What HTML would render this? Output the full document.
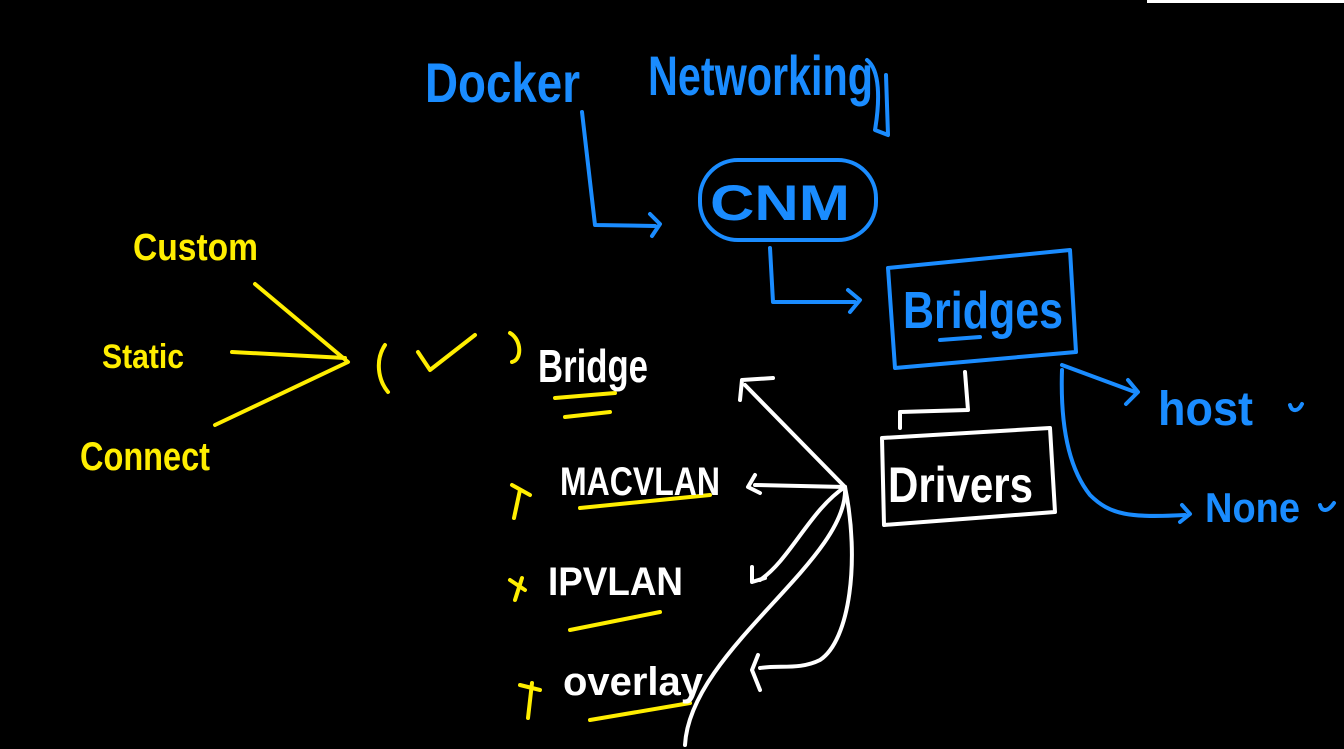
<!DOCTYPE html>
<html><head><meta charset="utf-8"><style>
html,body{margin:0;padding:0;background:#000;width:1344px;height:749px;overflow:hidden}
svg{display:block}
text{font-family:"Liberation Sans",sans-serif;font-weight:bold}
</style></head><body>
<svg width="1344" height="749" viewBox="0 0 1344 749" xmlns="http://www.w3.org/2000/svg">
<rect width="1344" height="749" fill="#000"/>
<rect x="1147" y="0" width="197" height="3" fill="#fff"/>
<g fill="none" stroke-linecap="round" stroke-linejoin="round" stroke-width="4">
<g stroke="#1a8cff">
<path d="M582 112 L595 225 L655 226 M650 214 L660 224 L652 236"/>
<rect x="700" y="160" width="176" height="80" rx="38"/>
<path d="M770 248 L773 302 L855 302 M848 290 L860 300 L850 312"/>
<path d="M888 268 L1070 250 L1076 352 L895 368 Z"/>
<path d="M940 340 L980 337"/>
<path d="M1062 365 L1135 392 M1128 380 L1138 392 L1126 404"/>
<path d="M1062 370 C1060 430 1070 470 1090 495 C1110 515 1130 518 1185 515 M1182 505 L1190 514 L1180 522"/>
<path d="M867 60 C880 70 880 100 875 130 L888 135 L886 75"/>
<path d="M1290 405 C1292 412 1298 412 1302 404"/>
<path d="M1320 505 C1322 512 1328 512 1334 503"/>
</g>
<g stroke="#fff">
<path d="M965 372 L968 410 L900 412 L900 428"/>
<path d="M882 438 L1050 428 L1055 512 L884 525 Z"/>
<path d="M845 487 L745 385 M740 400 L742 380 L773 378"/>
<path d="M845 487 L755 485 M755 475 L748 487 L760 493"/>
<path d="M845 487 C810 510 790 560 760 580 M752 567 L752 582 L765 578"/>
<path d="M845 487 C860 560 850 640 820 660 C800 670 780 665 760 668 M758 655 L752 670 L760 690"/>
<path d="M845 487 C850 560 690 650 685 745"/>
</g>
<g stroke="#ffee00">
<path d="M255 284 L348 362 L215 425"/>
<path d="M232 352 L345 358"/>
<path d="M385 345 C375 360 378 380 388 392"/>
<path d="M418 352 L430 370 L475 335"/>
<path d="M510 333 C522 340 522 360 512 362"/>
<path d="M555 398 L615 393 M565 417 L610 412"/>
<path d="M580 508 L710 495"/>
<path d="M570 630 L660 612"/>
<path d="M590 720 L690 703"/>
<path d="M512 485 L530 495 M520 490 L514 518"/>
<path d="M510 580 L525 590 M522 578 L515 600"/>
<path d="M520 685 L540 690 M532 683 L528 718"/>
</g>
</g>
<g font-size="56" fill="#1a8cff">
<text x="425" y="102" textLength="155" lengthAdjust="spacingAndGlyphs">Docker</text>
<text x="648" y="95" textLength="225" lengthAdjust="spacingAndGlyphs">Networking</text>
<text x="710" y="220" textLength="140" lengthAdjust="spacingAndGlyphs" font-size="50">CNM</text>
<text x="903" y="328" textLength="160" lengthAdjust="spacingAndGlyphs" font-size="52">Bridges</text>
<text x="1158" y="425" textLength="95" lengthAdjust="spacingAndGlyphs" font-size="48">host</text>
<text x="1205" y="522" textLength="95" lengthAdjust="spacingAndGlyphs" font-size="42">None</text>
</g>
<g fill="#fff">
<text x="538" y="382" textLength="110" lengthAdjust="spacingAndGlyphs" font-size="46">Bridge</text>
<text x="560" y="495" textLength="160" lengthAdjust="spacingAndGlyphs" font-size="40">MACVLAN</text>
<text x="548" y="595" textLength="135" lengthAdjust="spacingAndGlyphs" font-size="40">IPVLAN</text>
<text x="563" y="695" textLength="140" lengthAdjust="spacingAndGlyphs" font-size="40">overlay</text>
<text x="888" y="502" textLength="145" lengthAdjust="spacingAndGlyphs" font-size="50">Drivers</text>
</g>
<g fill="#ffee00">
<text x="133" y="260" textLength="125" lengthAdjust="spacingAndGlyphs" font-size="38">Custom</text>
<text x="102" y="368" textLength="82" lengthAdjust="spacingAndGlyphs" font-size="34">Static</text>
<text x="80" y="470" textLength="130" lengthAdjust="spacingAndGlyphs" font-size="40">Connect</text>
</g>
</svg>
</body></html>
